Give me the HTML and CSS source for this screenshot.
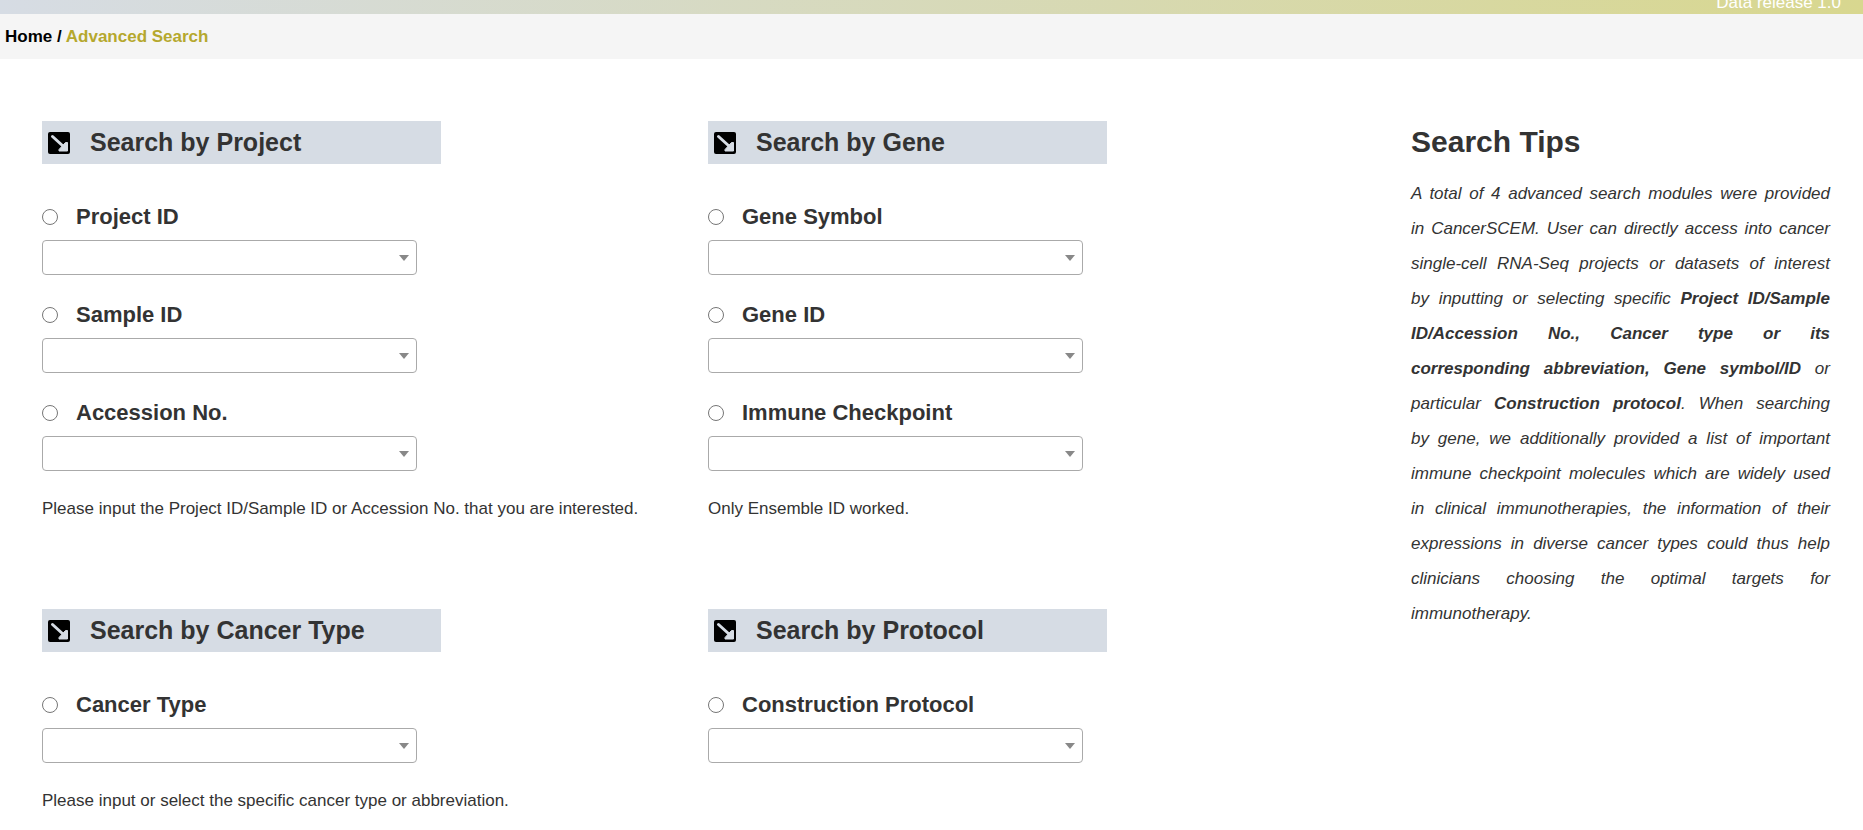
FILE: index.html
```
<!DOCTYPE html>
<html lang="en">
  <head>
    <meta charset="utf-8">
    <meta name="viewport" content="width=device-width, initial-scale=1.0">
    <title>Advanced Search</title>
    <link rel="stylesheet" href="styles.css">
  </head>

  <body>
    <svg width="0" height="0" class="defs">
      <symbol id="arrow" viewBox="0 0 22 22">
        <rect width="22" height="22" rx="2" fill="#000"/>
        <path d="M4.5 4.5 L15.5 14.5" fill="none" stroke="#d6dce4" stroke-width="3" stroke-linecap="round"/>
        <path d="M19.5 10.5 V19 H11 V17.5 L17.5 10.5 Z" fill="#d6dce4" stroke="#d6dce4" stroke-width="1" stroke-linejoin="round"/>
      </symbol>
    </svg>

    <header class="banner">
      <span>Data release 1.0</span>
    </header>
    <nav class="breadcrumb">
      <a href="#">Home</a> / <span class="current">Advanced Search</span>
    </nav>

    <div class="content">
      <main class="modules">
        <section>
          <h3 class="title"><svg class="icon"><use href="#arrow"/></svg>Search by Project</h3>
          <div class="field">
            <label><input type="radio" name="by">Project ID</label>
            <select aria-label="Project ID"></select>
          </div>
          <div class="field">
            <label><input type="radio" name="by">Sample ID</label>
            <select aria-label="Sample ID"></select>
          </div>
          <div class="field">
            <label><input type="radio" name="by">Accession No.</label>
            <select aria-label="Accession No."></select>
          </div>
          <p class="note">Please input the Project ID/Sample ID or Accession No. that you are interested.</p>
        </section>

        <section>
          <h3 class="title"><svg class="icon"><use href="#arrow"/></svg>Search by Gene</h3>
          <div class="field">
            <label><input type="radio" name="by">Gene Symbol</label>
            <select aria-label="Gene Symbol"></select>
          </div>
          <div class="field">
            <label><input type="radio" name="by">Gene ID</label>
            <select aria-label="Gene ID"></select>
          </div>
          <div class="field">
            <label><input type="radio" name="by">Immune Checkpoint</label>
            <select aria-label="Immune Checkpoint"></select>
          </div>
          <p class="note">Only Ensemble ID worked.</p>
        </section>

        <section>
          <h3 class="title"><svg class="icon"><use href="#arrow"/></svg>Search by Cancer Type</h3>
          <div class="field">
            <label><input type="radio" name="by">Cancer Type</label>
            <select aria-label="Cancer Type"></select>
          </div>
          <p class="note">Please input or select the specific cancer type or abbreviation.</p>
        </section>

        <section>
          <h3 class="title"><svg class="icon"><use href="#arrow"/></svg>Search by Protocol</h3>
          <div class="field">
            <label><input type="radio" name="by">Construction Protocol</label>
            <select aria-label="Construction Protocol"></select>
          </div>
        </section>
      </main>

      <aside class="tips">
        <h2>Search Tips</h2>
        <p>A total of 4 advanced search modules were provided in&nbsp;CancerSCEM. User can directly access into cancer single-cell RNA-Seq projects or datasets of interest by&nbsp;inputting or selecting specific <b>Project ID/Sample ID/Accession No., Cancer type or its corresponding&nbsp;abbreviation, Gene symbol/ID</b> or particular <b>Construction protocol</b>. When searching by&nbsp;gene, we additionally provided a list of important immune checkpoint molecules which are widely used in&nbsp;clinical immunotherapies, the information of their expressions in diverse cancer types could thus help clinicians choosing the optimal targets for immunotherapy.</p>
      </aside>
    </div>
  </body>
</html>
```

FILE: styles.css
```
* {
  box-sizing: border-box;
}

body {
  margin: 0;
  font-family: "Liberation Sans", Arial, Helvetica, sans-serif;
  font-size: 17px;
  color: #333;
  background: #fff;
}

.defs {
  display: block;
}

.banner {
  display: flex;
  justify-content: flex-end;
  align-items: flex-end;
  height: 14px;
  padding: 0 22px 1px 0;
  overflow: hidden;
  line-height: 20px;
  color: #fff;
  background: linear-gradient(to right, #d6dce4, #d8d78f);
}

.breadcrumb {
  padding: 0 5px;
  line-height: 45px;
  font-weight: bold;
  color: #000;
  background: #f5f5f5;
}

.breadcrumb a {
  color: #000;
  text-decoration: none;
}

.breadcrumb .current {
  color: #b5a82e;
}

.content {
  display: grid;
  grid-template-columns: 1369fr 419fr;
  padding: 62px 33px 0 42px;
}

.modules {
  display: grid;
  grid-template-columns: 666fr 703fr;
  row-gap: 89px;
  align-content: start;
}

.title {
  display: flex;
  align-items: center;
  gap: 20px;
  max-width: 399px;
  height: 43px;
  margin: 0 0 40px;
  padding-left: 6px;
  font-size: 25px;
  background: #d6dce4;
}

.icon {
  width: 22px;
  height: 22px;
}

.field {
  margin-bottom: 27px;
}

.field label {
  display: flex;
  align-items: center;
  gap: 18px;
  height: 26px;
  margin-bottom: 10px;
  font-size: 22px;
  font-weight: bold;
}

.field input {
  width: 16px;
  height: 16px;
  margin: 0;
}

/* select drawn flat with a small grey triangle */
.field select {
  display: block;
  width: 100%;
  max-width: 375px;
  height: 35px;
  padding: 0 28px 0 8px;
  font: inherit;
  border: 1px solid #aaa;
  border-radius: 4px;
  appearance: none;
  background: #fff url("data:image/svg+xml,%3Csvg xmlns='http://www.w3.org/2000/svg' width='10' height='6'%3E%3Cpath d='M0 0h10L5 6z' fill='%23888'/%3E%3C/svg%3E") no-repeat right 7px center;
}

.note {
  margin: 0;
  line-height: 22px;
}

.tips h2 {
  margin: 0 0 14px;
  font-size: 30px;
  line-height: 41px;
}

.tips p {
  margin: 0;
  line-height: 35px;
  font-style: italic;
  text-align: justify;
}
```
